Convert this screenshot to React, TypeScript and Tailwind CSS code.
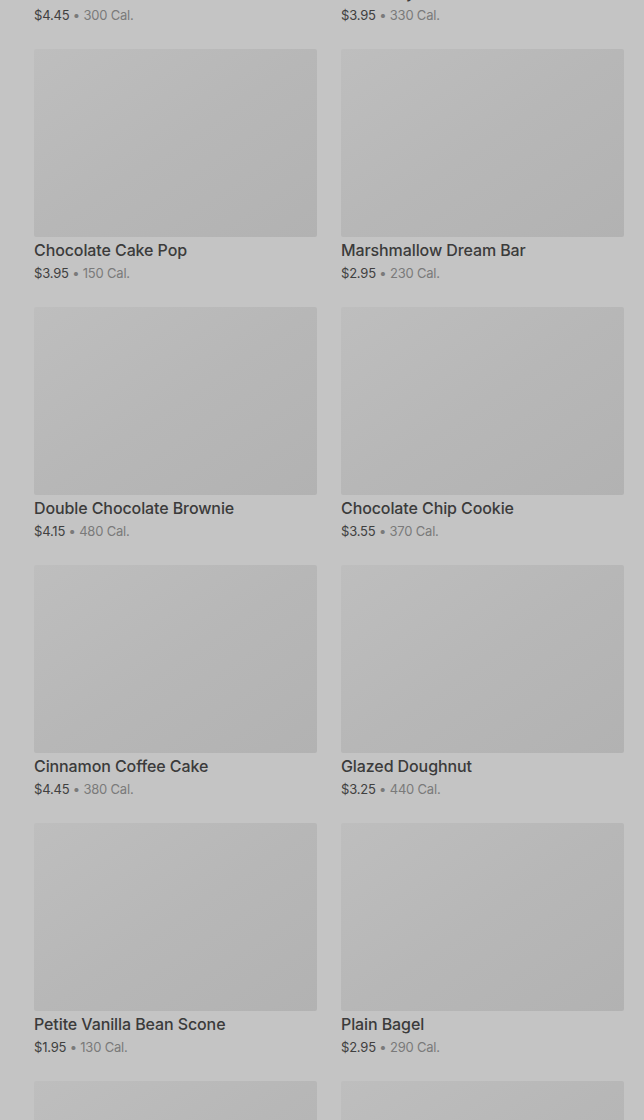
const items = [
  { name: "Iced Lemon Loaf", price: "$4.45", cal: 300 },
  { name: "Blueberry Muffin", price: "$3.95", cal: 330 },
  { name: "Chocolate Cake Pop", price: "$3.95", cal: 150 },
  { name: "Marshmallow Dream Bar", price: "$2.95", cal: 230 },
  { name: "Double Chocolate Brownie", price: "$4.15", cal: 480 },
  { name: "Chocolate Chip Cookie", price: "$3.55", cal: 370 },
  { name: "Cinnamon Coffee Cake", price: "$4.45", cal: 380 },
  { name: "Glazed Doughnut", price: "$3.25", cal: 440 },
  { name: "Petite Vanilla Bean Scone", price: "$1.95", cal: 130 },
  { name: "Plain Bagel", price: "$2.95", cal: 290 },
  { name: "Butter Croissant", price: "$3.45", cal: 260 },
  { name: "Banana Nut Bread", price: "$3.75", cal: 420 },
];

function MenuCard({ name, price, cal }: { name: string; price: string; cal: number }) {
  return (
    <div className="flex flex-col">
      <div className="h-[188px] w-full rounded-[2px] bg-gradient-to-br from-[#bebebe] via-[#b7b7b7] to-[#b2b2b2]" />
      <p className="mt-[3px] text-[16px] leading-[20px] font-medium text-[#3b3b3b] tracking-[-0.1px]">{name}</p>
      <p className="mt-[3px] text-[13px] leading-[20px] text-[#404040] tracking-[-0.2px]">
        {price}
        <span className="text-[#7a7a7a]"> • {cal} Cal.</span>
      </p>
    </div>
  );
}

export default function App() {
  return (
    <div
      className="h-[1120px] w-full overflow-hidden bg-[#c4c4c4]"
      style={{ fontFamily: "Inter, 'Noto Sans', sans-serif" }}
    >
      <div className="mt-[-209px] grid grid-cols-2 gap-x-6 gap-y-[24px] pl-[34px] pr-[20px]">
        {items.map((it) => (
          <MenuCard key={it.name} {...it} />
        ))}
      </div>
    </div>
  );
}
